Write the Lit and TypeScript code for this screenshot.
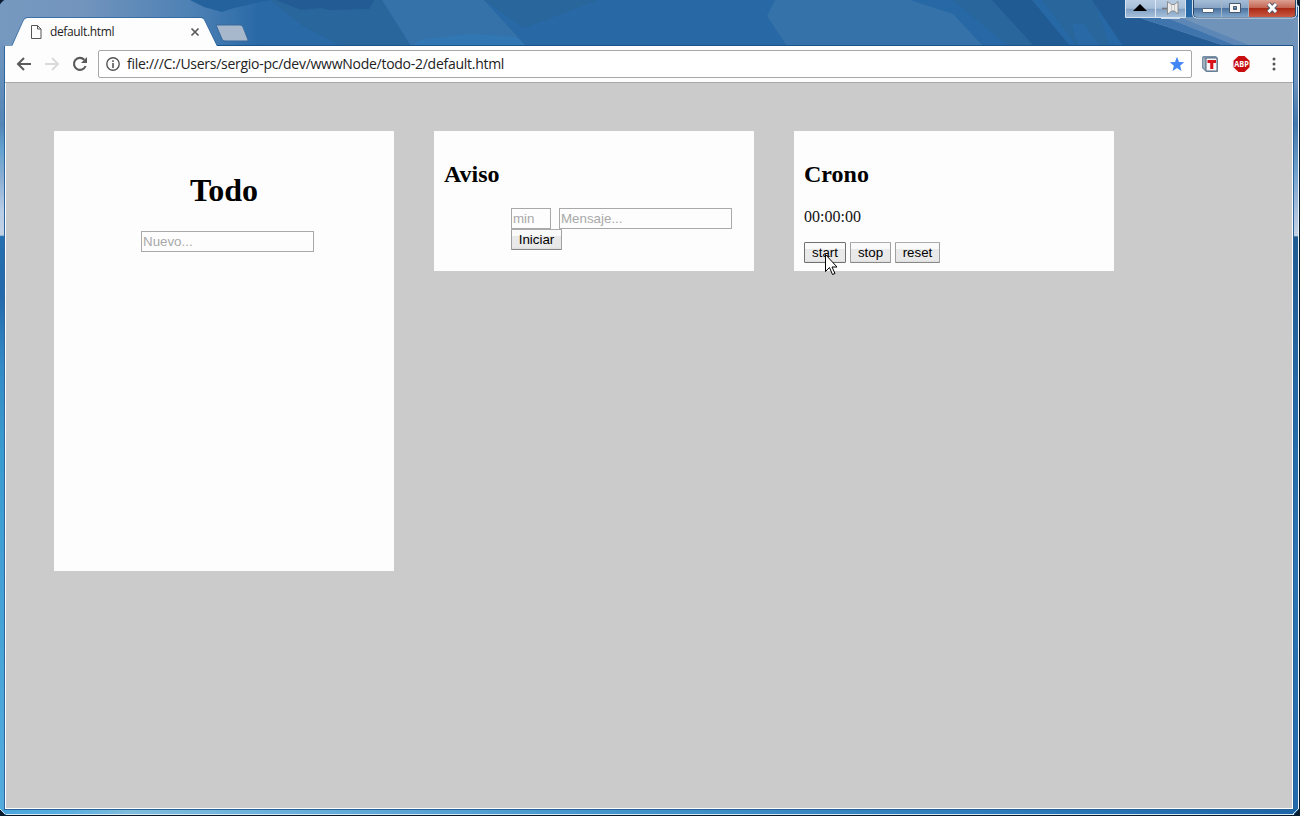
import { LitElement, html, css } from "lit";
import { customElement, property } from "lit/decorators.js";

@customElement("desktop-backdrop")
class DesktopBackdrop extends LitElement {
  static styles = css`
    :host { display: block; }
    svg { display: block; }
  `;
  render() {
    return html`<svg width="1300" height="816" viewBox="0 0 1300 816">
      <defs>
        <linearGradient id="top" x1="0" x2="1">
          <stop offset="0" stop-color="#7699c0" /><stop offset=".06" stop-color="#7395bd" />
          <stop offset=".15" stop-color="#4c80b4" /><stop offset=".2" stop-color="#2869a6" />
          <stop offset="1" stop-color="#2668a5" />
        </linearGradient>
        <linearGradient id="left" x2="0" y2="1">
          <stop offset="0" stop-color="#7297c0" /><stop offset=".11" stop-color="#5586b6" />
          <stop offset=".14" stop-color="#63a2cf" /><stop offset=".18" stop-color="#8eafd2" />
          <stop offset=".22" stop-color="#b9cde6" /><stop offset=".252" stop-color="#c4d3e4" />
          <stop offset=".254" stop-color="#2470b0" /><stop offset=".33" stop-color="#2369ab" />
          <stop offset=".42" stop-color="#338ac4" /><stop offset=".53" stop-color="#3a9bd0" />
          <stop offset="1" stop-color="#54abdd" />
        </linearGradient>
        <linearGradient id="right" x2="0" y2="1">
          <stop offset="0" stop-color="#7395bc" /><stop offset=".08" stop-color="#6a90bb" />
          <stop offset=".13" stop-color="#4478ac" />
          <stop offset=".19" stop-color="#6fa0cc" /><stop offset=".24" stop-color="#a9bfdc" />
          <stop offset=".271" stop-color="#c4d3e4" /><stop offset=".273" stop-color="#1f5b93" />
          <stop offset=".5" stop-color="#256aa8" /><stop offset=".7" stop-color="#2c75b4" />
          <stop offset="1" stop-color="#226aab" />
        </linearGradient>
        <linearGradient id="bottom" x1="0" x2="1">
          <stop offset="0" stop-color="#4aa5dc" /><stop offset=".05" stop-color="#58aee0" />
          <stop offset=".1" stop-color="#7fbcdc" /><stop offset=".2" stop-color="#6db2dc" />
          <stop offset=".45" stop-color="#4596cd" /><stop offset=".8" stop-color="#2a78b8" />
          <stop offset="1" stop-color="#1c65a6" />
        </linearGradient>
      </defs>
      <rect width="1300" height="816" fill="#06182a" />
      <rect width="1299" height="47" rx="5" fill="url(#top)" />
      <path d="M190 0h80l-36 8-12 4-18-5z" fill="#24629d" />
      <path d="M270 0h112l29 46h-70l-38-20z" fill="#28669c" />
      <path d="M276 0h98l-5 9-40 1-8-2-20 2z" fill="#235c95" />
      <path d="M382 0h102l42 46H411z" fill="#3472a9" />
      <path d="M420 40l50-6 46 3 10 9H411z" fill="#3177b4" />
      <path d="M484 0h114l-36 14-38 14z" fill="#28669c" />
      <path d="M775 0h135l43 14 30 32H787L767 16z" fill="#3472a9" />
      <path d="M953 0h72l43 46h-60z" fill="#28669c" />
      <path d="M992 0h40l38 46h-36z" fill="#205b94" />
      <path d="M1042 0h52l16 46h-33z" fill="#28669c" />
      <path d="M1072 24h12l16 22h-22z" fill="#2869a6" />
      <path d="M1092 0h50l88 46h-107z" fill="#235c95" />
      <path d="M1137 17h162v29h-74z" fill="#7093ba" />
      <path d="M1137 17h28l72 29h-12z" fill="#3f75ac" />
      <path d="M1165 17h14l72 29h-14z" fill="#5b86b6" />
      <rect y="40" width="5" height="774" fill="url(#left)" />
      <rect x="1293" y="20" width="6" height="795" fill="url(#right)" />
      <rect y="809" width="1299" height="6" fill="url(#bottom)" />
      <rect x="4" y="46" width="1" height="764" fill="#2c659e" />
      <rect x="1293" y="46" width="1" height="764" fill="#245f99" />
      <rect x="4" y="809" width="1290" height="1" fill="#246194" />
      <rect x="216" y="45" width="1077" height="1" fill="#1c548a" />
      <rect x="1298" y="6" width="1" height="803" fill="#eef4fa" />
      <rect x="6" y="814" width="1288" height="1" fill="#dcebf5" />
      <rect x="1299" width="1" height="816" fill="#061826" />
      <path d="M0 0h4L0 4zM1294 0h6v7zM0 809l6 7H0zM1300 808l-7 8h7z" fill="#0a1c30" />
      <path d="M1294 0l4 7M0 809l5 5M1293 814l5-5" stroke="#cfdfeb" fill="none" />
    </svg>`;
  }
}

@customElement("tab-strip")
class TabStrip extends LitElement {
  static styles = css`
    :host { display: flex; height: 46px; box-sizing: border-box; padding: 17px 0 0 12px; }
    .tab { position: relative; width: 205px; height: 29px; display: flex; align-items: center; box-sizing: border-box; padding: 0 17px 0 19px; }
    .shape { position: absolute; left: 0; top: 0; z-index: -1; }
    .title { font: 12px/16px "Open Sans", "Noto Sans", sans-serif; letter-spacing: -0.36px; margin-left: 8px; flex: 1; color: #222; }
    .new { margin-left: -2px; margin-top: 7px; }
    svg { display: block; }
  `;
  render() {
    return html`
      <div class="tab">
        <svg class="shape" width="206" height="29"><path d="M0 29L11 4Q12.500 1 15 1h174q3 0 4 3l12 25z" fill="#fdfdfd" /><path d="M0 28.500L11 4Q12.500 .5 15 .5h174q3 0 4 3.500l12 24.500" fill="none" stroke="#2b639c" stroke-opacity=".75" /></svg>
        <svg width="11" height="14"><path d="M.5 .5h6l3.500 3.500v9.500H.5zM6.500 .5V4H10" fill="none" stroke="#555" /></svg>
        <span class="title">default.html</span>
        <svg width="10" height="10"><path d="M1.500 1.500l7 7M8.500 1.500l-7 7" stroke="#5a5a5a" stroke-width="1.700" /></svg>
      </div>
      <svg class="new" width="34" height="18"><path d="M1 1h24q2 0 3 2l5 13q0 1-1 1H10q-2 0-3-2z" fill="#a8b8cc" stroke="#39699b" /></svg>
    `;
  }
}

@customElement("window-controls")
class WindowControls extends LitElement {
  static styles = css`
    :host { display: block; }
    svg { display: block; }
  `;
  render() {
    return html`<svg width="175" height="20" viewBox="1125 0 175 20">
      <defs>
        <linearGradient id="g" x2="0" y2="1"><stop offset="0" stop-color="#b9cde3" /><stop offset=".48" stop-color="#a6bfd9" /><stop offset=".5" stop-color="#819fc2" /><stop offset="1" stop-color="#a5c1dc" /></linearGradient>
        <linearGradient id="b" x2="0" y2="1"><stop offset="0" stop-color="#a5bdd7" /><stop offset=".48" stop-color="#87a4c5" /><stop offset=".5" stop-color="#4b739f" /><stop offset="1" stop-color="#7fa7cd" /></linearGradient>
        <linearGradient id="r" x2="0" y2="1"><stop offset="0" stop-color="#dca092" /><stop offset=".48" stop-color="#c36250" /><stop offset=".5" stop-color="#aa2a16" /><stop offset="1" stop-color="#c95a43" /></linearGradient>
      </defs>
      <path d="M1125.500 0v17.500h60V0" fill="url(#g)" stroke="#d7e3ef" />
      <path d="M1155.500 0v17" stroke="#dde8f2" />
      <path d="M1133 11l7-7 7 7z" fill="#000" />
      <path d="M1161 18.500h19" stroke="#cddded" />
      <path d="M1162 8.500h6" stroke="#777" stroke-width="1.600" />
      <path d="M1167.500 1.500l4 3h3l3.500-3v12.500l-3.500-3h-3l-4 3.500z" fill="#ececec" stroke="#858585" stroke-width=".9" />
      <path d="M1171.500 5v6M1174.500 5v6" stroke="#bbb" stroke-width=".8" />
      <path d="M1192.500 0v14q0 4 4 4h95q5 0 5-4V0" fill="#26466c" stroke="#d5e1ed" />
      <path d="M1194 0h27v17h-24q-3 0-3-3z" fill="url(#b)" /><path d="M1222 0h26v17h-26z" fill="url(#b)" />
      <path d="M1249 0h46v14q0 3-3 3h-43z" fill="url(#r)" />
      <path d="M1221.500 0v17M1248.500 0v17" stroke="#dbe4ec" stroke-opacity=".7" />
      <rect x="1202.500" y="8.500" width="11" height="4" rx=".5" fill="#fff" stroke="#53647a" />
      <path d="M1229.500 3.500h11v9h-11zM1233.500 6.500h3v3h-3z" fill="#f7f7f7" stroke="#46566c" fill-rule="evenodd" />
      <path d="M1268.500 4l7.500 8M1276 4l-7.500 8" stroke="#53596a" stroke-width="4.800" />
      <path d="M1268.500 4l7.500 8M1276 4l-7.500 8" stroke="#fff" stroke-width="2.900" />
    </svg>`;
  }
}

@customElement("browser-toolbar")
class BrowserToolbar extends LitElement {
  static styles = css`
    :host { display: flex; align-items: center; box-sizing: border-box; height: 37px; padding: 0 12px 1px 11px; background: #fdfdfd; border-bottom: 1px solid #a9a9a9; }
    svg { display: block; flex: none; }
    .back { margin-right: 12px; }
    .next { margin-right: 12px; }
    .reload { margin-right: 10px; }
    .address { display: flex; align-items: center; box-sizing: border-box; width: 1094px; height: 28px; border: 1px solid #a8a8a8; border-radius: 2px; padding: 0 6px 0 7px; background: #fff; }
    .url { flex: 1; margin-left: 7px; white-space: nowrap; font: 14px/20px "Open Sans", "Noto Sans", sans-serif; letter-spacing: -0.27px; color: #222; }
    .t { margin-left: 10px; }
    .abp { margin-left: 14px; }
    .abp text { font: bold 8.500px "Open Sans", sans-serif; }
    .more { margin-left: 22px; }
  `;
  render() {
    return html`
      <svg class="back" width="16" height="16"><path d="M15 8H2M8 2L2 8l6 6" fill="none" stroke="#5a5a5a" stroke-width="2" /></svg>
      <svg class="next" width="16" height="16"><path d="M1 8h13M8 2l6 6-6 6" fill="none" stroke="#dadada" stroke-width="2" /></svg>
      <svg class="reload" width="16" height="16"><path d="M13.600 10A6 6 0 1 1 12.300 3.700" fill="none" stroke="#5a5a5a" stroke-width="2.100" /><path d="M15 1v6H9z" fill="#5a5a5a" /></svg>
      <div class="address">
        <svg width="14" height="14"><circle cx="7" cy="7" r="6.200" fill="none" stroke="#555" stroke-width="1.400" /><path d="M7 6v5M7 3.300v1.600" stroke="#555" stroke-width="1.600" /></svg>
        <span class="url">file:///C:/Users/sergio-pc/dev/wwwNode/todo-2/default.html</span>
        <svg width="16" height="16"><path d="M8 .8l2 5.100 5.200.3-4.100 3.500 1.400 5.200L8 12.100l-4.500 2.800 1.400-5.200L.8 6.200 6 5.900z" fill="#4285f4" /></svg>
      </div>
      <svg class="t" width="17" height="16"><path d="M0 1.500Q0 0 1.500 0H14l2 2v14H4l-4-4z" fill="#7890a6" /><path d="M1 1.500l2.500 2v10L1 11z" fill="#a3b1be" /><rect x="4" y="2" width="11" height="13" rx="1.500" fill="#f4f6f8" stroke="#566c82" /><path d="M5.500 4h8.500v3h-2.700v6H8.200V7H5.500z" fill="#d9121a" /></svg>
      <svg class="abp" width="17" height="16"><path d="M5.500 0h6L16.500 4.700v6.600L11.500 16h-6L.5 11.300V4.700z" fill="#c70d0d" /><text x="8.500" y="11" text-anchor="middle" fill="#fff" textLength="14.500" lengthAdjust="spacingAndGlyphs">ABP</text></svg>
      <svg class="more" width="4" height="14"><g fill="#555"><circle cx="2" cy="2" r="1.500" /><circle cx="2" cy="7" r="1.500" /><circle cx="2" cy="12" r="1.500" /></g></svg>
    `;
  }
}

const controls = css`
  input { box-sizing: border-box; width: 173px; height: 21px; margin: 0; padding: 1px; border: 1px solid #a9a9a9; background: #fdfdfd; font: 13.333px "Liberation Sans", Arial, sans-serif; display: block; border-radius: 0; }
  input::placeholder { color: #a9a9a9; }
  button { box-sizing: border-box; height: 21px; margin: 0; padding: 0 0 1px; border: 1px solid #a0a0a0; border-top-color: #acacac; border-bottom-color: #888; border-radius: 1px; background: linear-gradient(#fafafa 0 6px, #e9e9e9 6px 17px, #dcdcdc); font: 13.333px/17px "Liberation Sans", Arial, sans-serif; color: #000; display: block; }
  h1, h2 { margin: 0; color: #000; }
  h2 { font-size: 24px; line-height: 27px; }
`;

@customElement("todo-card")
class TodoCard extends LitElement {
  static styles = [controls, css`
    :host { display: block; box-sizing: border-box; width: 340px; height: 440px; padding: 41px 0 0; background: #fdfdfd; }
    h1 { font-size: 32px; line-height: 37px; text-align: center; }
    input { margin: 22px 0 0 87px; }
  `];
  render() {
    return html`<h1>Todo</h1><input placeholder="Nuevo..." />`;
  }
}

@customElement("aviso-card")
class AvisoCard extends LitElement {
  static styles = [controls, css`
    :host { display: block; box-sizing: border-box; width: 320px; height: 140px; padding: 30px 10px 0; background: #fdfdfd; }
    .form { padding: 20px 0 0 67px; }
    .row { display: flex; gap: 8px; }
    .min { width: 40px; }
    button { width: 51px; }
  `];
  render() {
    return html`<h2>Aviso</h2>
      <div class="form">
        <div class="row"><input class="min" placeholder="min" /><input placeholder="Mensaje..." /></div>
        <button>Iniciar</button>
      </div>`;
  }
}

@customElement("crono-card")
class CronoCard extends LitElement {
  @property() time = "00:00:00";
  static styles = [controls, css`
    :host { display: block; box-sizing: border-box; width: 320px; height: 140px; padding: 30px 10px 0; background: #fdfdfd; }
    .time { font-size: 16px; line-height: 18px; margin: 20px 0 16px; color: #111; }
    .row { display: flex; gap: 4px; }
    .start { width: 42px; border-color: #707070; }
    .stop { width: 41px; }
    .reset { width: 45px; }
  `];
  render() {
    return html`<h2>Crono</h2>
      <div class="time">${this.time}</div>
      <div class="row"><button class="start">start</button><button class="stop">stop</button><button class="reset">reset</button></div>`;
  }
}

@customElement("app-root")
class AppRoot extends LitElement {
  static styles = css`
    :host { display: block; position: relative; width: 1300px; height: 816px; overflow: hidden; font-family: "Liberation Serif", "Times New Roman", serif; }
    .backdrop { position: absolute; inset: 0; }
    .window { position: relative; z-index: 1; display: flex; flex-direction: column; height: 809px; }
    .body { flex: 1; display: flex; flex-direction: column; margin: 0 7px 0 5px; }
    .page { flex: 1; display: flex; align-items: flex-start; gap: 40px; padding: 48px; background: #cbcbcb; border: solid #fdfdfd; border-width: 0 1px 1px; }
    .controls { position: absolute; right: 0; top: 0; z-index: 2; }
    .cursor { position: absolute; left: 824px; top: 253px; z-index: 3; }
  `;
  render() {
    return html`
      <desktop-backdrop class="backdrop"></desktop-backdrop>
      <div class="window">
        <tab-strip></tab-strip>
        <div class="body">
          <browser-toolbar></browser-toolbar>
          <div class="page">
            <todo-card></todo-card>
            <aviso-card></aviso-card>
            <crono-card></crono-card>
          </div>
        </div>
      </div>
      <window-controls class="controls"></window-controls>
      <svg class="cursor" width="14" height="24"><path d="M1.500 1.500v17l4-4 3 7 2.500-1-3-6.500h5z" fill="#fff" stroke="#000" /></svg>
    `;
  }
}
